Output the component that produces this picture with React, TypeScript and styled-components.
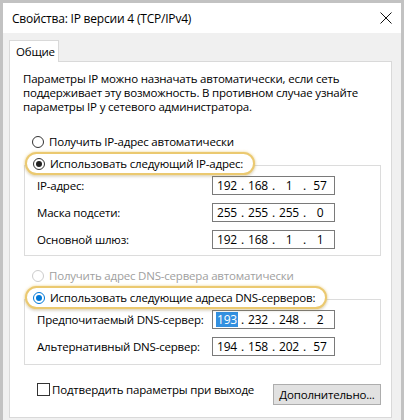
import React from "react";
import styled, { createGlobalStyle } from "styled-components";

const GlobalStyle = createGlobalStyle`
  html, body {
    margin: 0;
    padding: 0;
    background: #c2c2c2;
  }
  body {
    font-family: "Segoe UI", "Open Sans", "Noto Sans", sans-serif;
    font-size: 11.5px;
    letter-spacing: -0.2px;
    color: #000;
  }
`;

type IpValue = { parts: string[]; selected?: number };

const Window = styled.div`
  width: 398px;
  height: 417px;
  margin: 3px 3px 0 3px;
  background: #f0f0f0;
  display: flex;
  flex-direction: column;
  overflow: hidden;
`;

const TitleBar = styled.div`
  height: 30px;
  background: #fff;
  display: flex;
  align-items: center;
  justify-content: space-between;
  padding: 0 9px 0 9px;
  flex-shrink: 0;
`;

const Title = styled.span`
  font-size: 12px;
`;

const Body = styled.div`
  padding: 7px 9px 0 6px;
  display: flex;
  flex-direction: column;
`;

const TabStrip = styled.div`
  display: flex;
  height: 22px;
  position: relative;
  z-index: 1;
  margin-bottom: -1px;
`;

const Tab = styled.div`
  width: 50px;
  height: 22px;
  box-sizing: border-box;
  border: 1px solid #d9d9d9;
  border-bottom: none;
  background: #fff;
  display: flex;
  align-items: center;
  padding-left: 6px;
`;

const Panel = styled.div`
  height: 357px;
  box-sizing: border-box;
  border: 1px solid #d9d9d9;
  background: #fff;
  display: flex;
  flex-direction: column;
  padding: 0 10px 0 0;
`;

const Intro = styled.div`
  margin: 10px 0 0 13px;
  display: flex;
  flex-direction: column;
`;

const IntroLine = styled.span`
  height: 14px;
  line-height: 14px;
  white-space: nowrap;
`;

const RadioRow = styled.label<{ $disabled?: boolean; $top?: number }>`
  display: flex;
  align-items: center;
  height: 15px;
  margin: ${(p) => p.$top ?? 0}px 0 0 22px;
  gap: 5px;
  color: ${(p) => (p.$disabled ? "#a0a0a0" : "#000")};
`;

const Radio = styled.span<{ $state: "off" | "on" | "blue" | "disabled" }>`
  width: 12px;
  height: 12px;
  box-sizing: border-box;
  border-radius: 50%;
  border: 1px solid
    ${(p) =>
      p.$state === "disabled" ? "#cccccc" : p.$state === "blue" ? "#0078d7" : "#333"};
  background: #fff;
  display: flex;
  align-items: center;
  justify-content: center;
  flex-shrink: 0;

  &::after {
    content: "";
    width: 6px;
    height: 6px;
    border-radius: 50%;
    background: ${(p) =>
      p.$state === "on" ? "#222" : p.$state === "blue" ? "#0078d7" : "transparent"};
  }
`;

const GroupHeader = styled.div`
  position: relative;
  z-index: 1;
  align-self: flex-start;
  margin: 3px 0 0 15px;
  height: 23px;
  box-sizing: border-box;
  padding: 0 10px 0 6px;
  border: 2px solid #ebc970;
  border-radius: 12px;
  background: #fff;
  display: flex;
  align-items: center;
  box-shadow: 0 0 3px rgba(235, 201, 112, 0.8), 0 2px 3px rgba(0, 0, 0, 0.12);

  ${RadioRow} {
    margin: 0;
  }
`;

const GroupBox = styled.div<{ $bottom: number }>`
  margin: -10px 0 0 14px;
  border: 1px solid #dcdcdc;
  padding: 10px 0 ${(p) => p.$bottom}px 12px;
  display: flex;
  flex-direction: column;
  gap: 8px;
`;

const FieldRow = styled.div`
  display: flex;
  align-items: center;
  height: 19px;
`;

const FieldLabel = styled.span`
  width: 175px;
`;

const IpBox = styled.div`
  width: 123px;
  height: 19px;
  box-sizing: border-box;
  border: 1px solid #7a7a7a;
  display: flex;
  align-items: center;
  padding-left: 1px;
  font-size: 12px;
`;

const IpPart = styled.span<{ $selected?: boolean }>`
  width: 26px;
  display: flex;
  justify-content: center;

  span {
    padding: 0 1px;
    line-height: 15px;
    background: ${(p) => (p.$selected ? "#3390e0" : "transparent")};
    color: ${(p) => (p.$selected ? "#fff" : "#000")};
  }
`;

const Dot = styled.span`
  width: 5px;
  text-align: center;
`;

const Footer = styled.div`
  display: flex;
  justify-content: space-between;
  align-items: flex-start;
  margin: 17px 0 0 27px;
`;

const CheckLabel = styled.label`
  display: flex;
  align-items: center;
  gap: 2px;
  height: 15px;
`;

const CheckBox = styled.span`
  width: 13px;
  height: 13px;
  box-sizing: border-box;
  border: 1px solid #333;
  background: #fff;
`;

const Button = styled.button`
  margin-top: 2px;
  width: 108px;
  height: 21px;
  border: 1px solid #adadad;
  background: #e1e1e1;
  font: inherit;
  letter-spacing: inherit;
  color: #000;
  padding: 0;
`;

const CloseIcon = () => (
  <svg width="12" height="12" viewBox="0 0 12 12">
    <path d="M0.5 0.5 L11.5 11.5 M11.5 0.5 L0.5 11.5" stroke="#111" strokeWidth="1" fill="none" />
  </svg>
);

const IpField = ({ parts, selected }: IpValue) => (
  <IpBox>
    {parts.map((p, i) => (
      <React.Fragment key={i}>
        {i > 0 && <Dot>.</Dot>}
        <IpPart $selected={selected === i}>
          <span>{p}</span>
        </IpPart>
      </React.Fragment>
    ))}
  </IpBox>
);

const ipRows: { label: string; value: IpValue }[] = [
  { label: "IP-адрес:", value: { parts: ["192", "168", "1", "57"] } },
  { label: "Маска подсети:", value: { parts: ["255", "255", "255", "0"] } },
  { label: "Основной шлюз:", value: { parts: ["192", "168", "1", "1"] } },
];

const dnsRows: { label: string; value: IpValue }[] = [
  { label: "Предпочитаемый DNS-сервер:", value: { parts: ["193", "232", "248", "2"], selected: 0 } },
  { label: "Альтернативный DNS-сервер:", value: { parts: ["194", "158", "202", "57"] } },
];

const introLines = [
  "Параметры IP можно назначать автоматически, если сеть",
  "поддерживает эту возможность. В противном случае узнайте",
  "параметры IP у сетевого администратора.",
];

export default function App() {
  return (
    <>
      <GlobalStyle />
      <Window>
        <TitleBar>
          <Title>Свойства: IP версии 4 (TCP/IPv4)</Title>
          <CloseIcon />
        </TitleBar>
        <Body>
          <TabStrip>
            <Tab>Общие</Tab>
          </TabStrip>
          <Panel>
            <Intro>
              {introLines.map((l) => (
                <IntroLine key={l}>{l}</IntroLine>
              ))}
            </Intro>

            <RadioRow $top={20}>
              <Radio $state="off" />
              Получить IP-адрес автоматически
            </RadioRow>
            <GroupHeader>
              <RadioRow>
                <Radio $state="on" />
                Использовать следующий IP-адрес:
              </RadioRow>
            </GroupHeader>
            <GroupBox $bottom={6}>
              {ipRows.map((r) => (
                <FieldRow key={r.label}>
                  <FieldLabel>{r.label}</FieldLabel>
                  <IpField {...r.value} />
                </FieldRow>
              ))}
            </GroupBox>

            <RadioRow $top={12} $disabled>
              <Radio $state="disabled" />
              Получить адрес DNS-сервера автоматически
            </RadioRow>
            <GroupHeader>
              <RadioRow>
                <Radio $state="blue" />
                Использовать следующие адреса DNS-серверов:
              </RadioRow>
            </GroupHeader>
            <GroupBox $bottom={8}>
              {dnsRows.map((r) => (
                <FieldRow key={r.label}>
                  <FieldLabel>{r.label}</FieldLabel>
                  <IpField {...r.value} />
                </FieldRow>
              ))}
            </GroupBox>

            <Footer>
              <CheckLabel>
                <CheckBox />
                Подтвердить параметры при выходе
              </CheckLabel>
              <Button>Дополнительно...</Button>
            </Footer>
          </Panel>
        </Body>
      </Window>
    </>
  );
}
